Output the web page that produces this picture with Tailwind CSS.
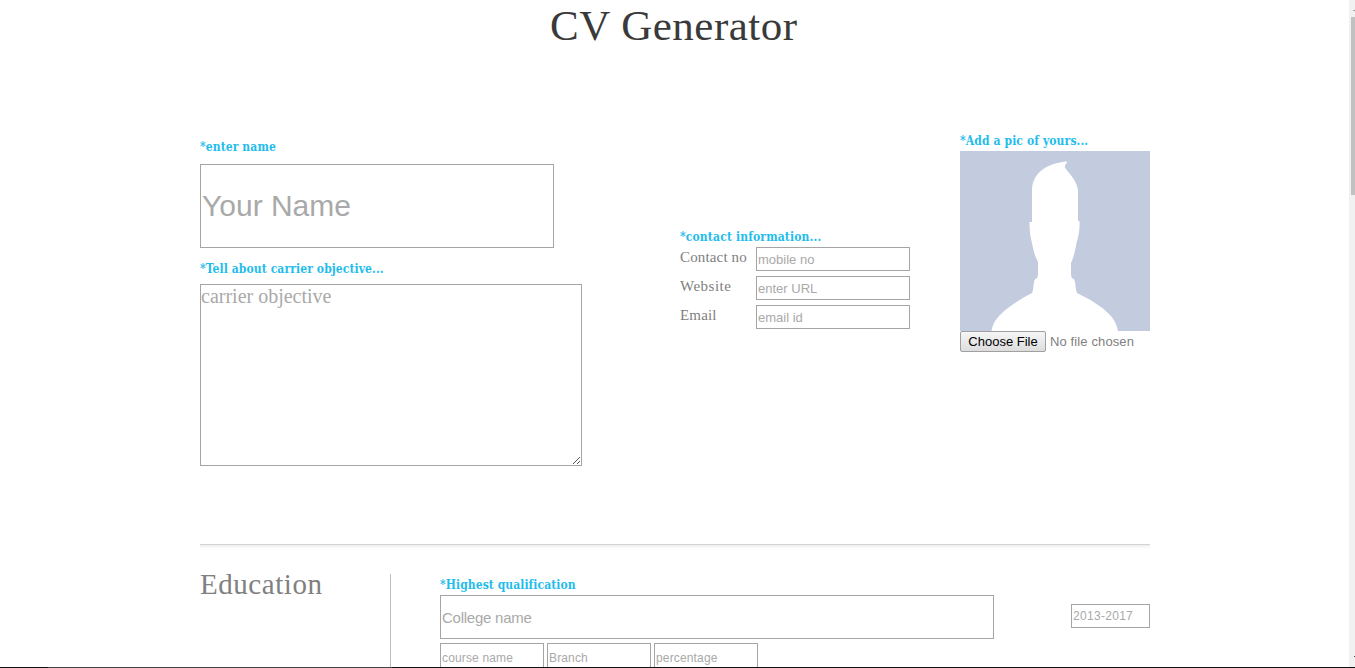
<!DOCTYPE html>
<html lang="en">
<head>
<meta charset="utf-8">
<title>CV Generator</title>
<script src="https://cdn.jsdelivr.net/npm/@tailwindcss/browser@4"></script>
</head>
<body class="relative flex h-[668px] w-[1355px] overflow-hidden bg-white font-['Liberation_Serif',serif] text-[#808080]">
<main class="h-[668px] w-[1349px] overflow-hidden">
  <h1 class="h-[130px] pl-[550px] text-[43px] leading-[51px] tracking-[0.5px] whitespace-nowrap text-[#3a3a3a]">CV Generator</h1>
  <section class="ml-[200px] flex h-[414px] w-[950px]">
    <div class="w-[480px] pt-[8px]">
      <label class="block h-[26px] font-['DejaVu_Serif_Condensed','DejaVu_Serif',serif] text-[12px] leading-[18px] font-bold tracking-[0.1px] whitespace-nowrap text-[#1fbcec]">*enter name</label>
      <input placeholder="Your Name" class="block h-[84px] w-[354px] border border-[#a5a5a5] pl-px font-['Liberation_Sans',sans-serif] text-[30px] placeholder:text-[#a9a9a9]">
      <label class="mt-[12px] block h-[24px] font-['DejaVu_Serif_Condensed','DejaVu_Serif',serif] text-[12px] leading-[18px] font-bold tracking-[0.1px] whitespace-nowrap text-[#1fbcec]">*Tell about carrier objective...</label>
      <div class="relative h-[182px] w-[382px]">
        <textarea placeholder="carrier objective" class="block h-full w-full resize-none overflow-hidden border border-[#a5a5a5] text-[20px] leading-[23px] placeholder:text-[#a9a9a9]"></textarea>
        <svg class="absolute right-[2px] bottom-[2px]" width="7" height="7" viewBox="0 0 7 7" stroke="#555" fill="none"><path d="M0 7 7 0M4 7 7 4"/></svg>
      </div>
    </div>
    <div class="w-[280px] pt-[98px]">
      <h2 class="h-[19px] font-['DejaVu_Serif_Condensed','DejaVu_Serif',serif] text-[12px] leading-[18px] font-bold tracking-[0.15px] whitespace-nowrap text-[#1fbcec]">*contact information...</h2>
      <div class="grid grid-cols-[76px_154px] gap-y-[5px] text-[15px] leading-[20px] tracking-[0.15px]">
        <label class="whitespace-nowrap">Contact no</label><input placeholder="mobile no" class="h-[24px] border border-[#a5a5a5] pl-px font-['Liberation_Sans',sans-serif] text-[13px] tracking-normal placeholder:text-[#a9a9a9]">
        <label class="tracking-[0.5px]">Website</label><input placeholder="enter URL" class="h-[24px] border border-[#a5a5a5] pl-px font-['Liberation_Sans',sans-serif] text-[13px] tracking-normal placeholder:text-[#a9a9a9]">
        <label>Email</label><input placeholder="email id" class="h-[24px] border border-[#a5a5a5] pl-px font-['Liberation_Sans',sans-serif] text-[13px] tracking-normal placeholder:text-[#a9a9a9]">
      </div>
    </div>
    <div class="w-[190px] pt-[2px]">
      <h2 class="h-[19px] font-['DejaVu_Serif_Condensed','DejaVu_Serif',serif] text-[12px] leading-[18px] font-bold tracking-[0.12px] whitespace-nowrap text-[#1fbcec]">*Add a pic of yours...</h2>
      <svg class="block" width="190" height="180" viewBox="0 0 190 180"><path fill="#c3cbdf" d="M0 0h190v180H0z"/><path fill="#fff" d="M31.500 180C33 170 39 164 48 157Q58 149 72 142C74 138 73 132 75 128Q77.500 128 78 124V111C74 104 73 96 71.500 90C70 84 69.500 78 69.500 71H72V40C72 21 88 12 107 10.500C107 13 104 14 105 16.500C109 23 116 28 118 39V70H119.500C120 80 118 87 116.500 92C115 101 113 108 111 112V124Q111.500 128 114 128C116 132 115 137 117 142Q130 148 141 156C150 163 156 169 158 180Z"/></svg>
      <div class="flex items-center gap-[4px] font-['Liberation_Sans',sans-serif] text-[13px] leading-[19px] whitespace-nowrap">
        <button class="h-[21px] w-[86px] rounded-[2px] border border-[#a0a0a0] bg-linear-to-b from-[#f6f6f6] to-[#dddddd] text-black">Choose File</button>
        <span class="tracking-[0.12px]">No file chosen</span>
      </div>
    </div>
  </section>
  <section class="ml-[200px] flex w-[950px] flex-col">
    <div class="h-[30px]"><div class="h-px bg-[#d3d3d3]"></div><div class="h-[4px] bg-linear-to-b from-[#eeeeee] to-white"></div></div>
    <div class="flex h-[94px]">
      <h2 class="w-[190px] text-[29px] leading-[21px] tracking-[0.55px] whitespace-nowrap">Education</h2>
      <div class="w-[50px] border-l border-[#bcbcbc]"></div>
      <div class="w-[631px] pt-[2px]">
        <h3 class="h-[19px] font-['DejaVu_Serif_Condensed','DejaVu_Serif',serif] text-[12px] leading-[18px] font-bold tracking-[0.07px] whitespace-nowrap text-[#1fbcec]">*Highest qualification</h3>
        <input placeholder="College name" class="block h-[44px] w-[554px] border border-[#a5a5a5] pl-px font-['Liberation_Sans',sans-serif] text-[15px] tracking-[-0.25px] placeholder:text-[#a9a9a9]">
        <div class="mt-[4px] flex gap-[3px] font-['Liberation_Sans',sans-serif] text-[12px] tracking-[0.15px]">
          <input placeholder="course name" class="h-[30px] w-[104px] border border-[#a5a5a5] pl-px placeholder:text-[#a9a9a9]">
          <input placeholder="Branch" class="h-[30px] w-[104px] border border-[#a5a5a5] pl-px placeholder:text-[#a9a9a9]">
          <input placeholder="percentage" class="h-[30px] w-[104px] border border-[#a5a5a5] pl-px placeholder:text-[#a9a9a9]">
        </div>
      </div>
      <div class="w-[79px] pt-[30px]"><input placeholder="2013-2017" class="block h-[24px] w-[79px] border border-[#a5a5a5] pl-px font-['Liberation_Sans',sans-serif] text-[12px] tracking-[0.3px] placeholder:text-[#a9a9a9]"></div>
    </div>
  </section>
</main>
<aside class="h-[668px] w-[6px] bg-[#f1f1f1] pt-[17px] pl-[2px]"><div class="h-[178px] w-[4px] bg-[#c1c1c1]"></div></aside>
<div class="absolute top-[10px] right-0 h-px w-[2px] bg-[#a3a3a3]"></div>
<div class="absolute top-[656px] right-0 h-px w-px bg-[#505050]"></div>
<div class="absolute bottom-0 left-0 flex h-px w-full bg-[#111]"><div class="ml-[48px] w-[344px] bg-[#444]"></div></div>
</body>
</html>
